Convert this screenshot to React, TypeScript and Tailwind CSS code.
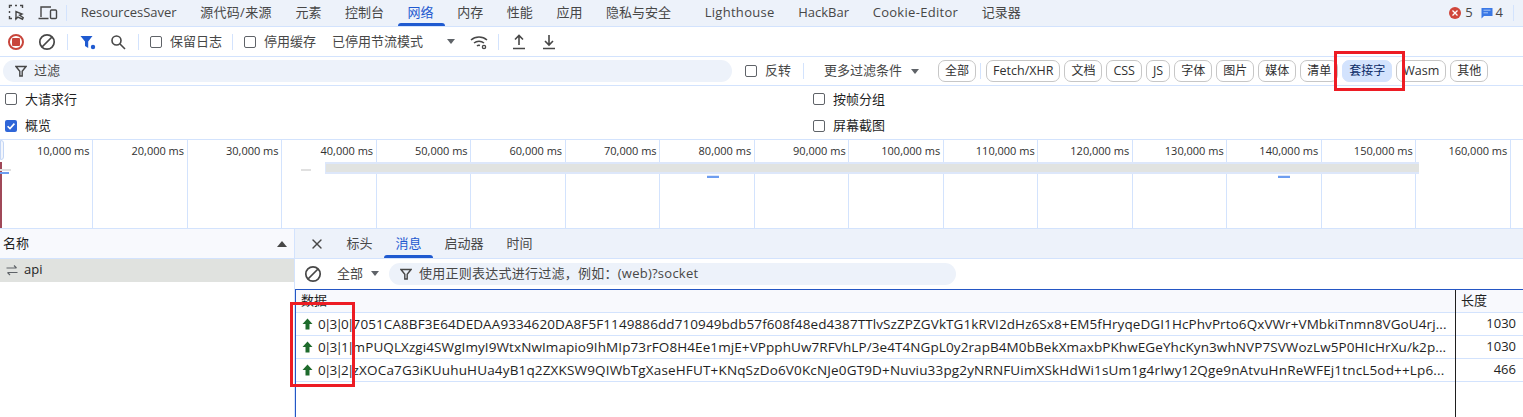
import { X } from 'lucide-react';

const FONT = "[font-family:'Open_Sans','Noto_Sans_CJK_SC',sans-serif]";

const mainTabs = [
  'ResourcesSaver',
  '源代码/来源',
  '元素',
  '控制台',
  '网络',
  '内存',
  '性能',
  '应用',
  '隐私与安全',
];
const extraTabs = ['Lighthouse', 'HackBar', 'Cookie-Editor', '记录器'];
const wideTabs = ['源代码/来源', 'Lighthouse', 'Cookie-Editor'];

const chips = ['Fetch/XHR', '文档', 'CSS', 'JS', '字体', '图片', '媒体', '清单', '套接字', 'Wasm', '其他'];

const ticks = [
  '10,000 ms', '20,000 ms', '30,000 ms', '40,000 ms', '50,000 ms', '60,000 ms', '70,000 ms', '80,000 ms',
  '90,000 ms', '100,000 ms', '110,000 ms', '120,000 ms', '130,000 ms', '140,000 ms', '150,000 ms', '160,000 ms',
];

const messages = [
  {
    prefix: '0|3|0|',
    data: '7051CA8BF3E64DEDAA9334620DA8F5F1149886dd710949bdb57f608f48ed4387TTlvSzZPZGVkTG1kRVI2dHz6Sx8+EM5fHryqeDGI1HcPhvPrto6QxVWr+VMbkiTnmn8VGoU4rj...',
    len: 1030,
    fit: 'tracking-[0.09px]',
  },
  {
    prefix: '0|3|1|',
    data: 'mPUQLXzgi4SWgImyI9WtxNwImapio9IhMIp73rFO8H4Ee1mjE+VPpphUw7RFVhLP/3e4T4NGpL0y2rapB4M0bBekXmaxbPKhwEGeYhcKyn3whNVP7SVWozLw5P0HIcHrXu/k2p...',
    len: 1030,
    fit: 'tracking-[0.09px]',
  },
  {
    prefix: '0|3|2|',
    data: 'zXOCa7G3iKUuhuHUa4yB1q2ZXKSW9QIWbTgXaseHFUT+KNqSzDo6V0KcNJe0GT9D+Nuviu33pg2yNRNFUimXSkHdWi1sUm1g4rIwy12Qge9nAtvuHnReWFEj1tncL5od++Lp6...',
    len: 466,
    fit: 'tracking-[0.16px]',
  },
];

function Sep({ className = '' }: { className?: string }) {
  return <div className={`h-4 w-px bg-[#d3e3fd] ${className}`} />;
}

function Check({ label, checked = false, className = '' }: { label: string; checked?: boolean; className?: string }) {
  return (
    <label className={`flex items-center gap-2 ${className}`}>
      {checked ? (
        <span className="flex h-3 w-3 items-center justify-center rounded-[2px] bg-[#2f66d8]">
          <svg viewBox="0 0 12 12" className="h-3 w-3" fill="none" stroke="white" strokeWidth="1.6">
            <path d="M2.6 6.2 5 8.6l4.4-5" />
          </svg>
        </span>
      ) : (
        <span className="h-3 w-3 rounded-[2px] border border-[#5f6368]" />
      )}
      <span>{label}</span>
    </label>
  );
}

function Caret({ className = '' }: { className?: string }) {
  return <span className={`h-0 w-0 border-x-4 border-t-[5px] border-x-transparent border-t-[#5f6368] ${className}`} />;
}

function ClearIcon() {
  return (
    <svg viewBox="0 0 18 18" className="h-[18px] w-[18px]" fill="none" stroke="#474747" strokeWidth="1.7">
      <circle cx="9" cy="9" r="7.2" />
      <path d="M4 14 14 4" />
    </svg>
  );
}

function FunnelIcon({ className = '' }: { className?: string }) {
  return (
    <svg viewBox="0 0 12 12" className={`h-3 w-3 ${className}`} fill="none" stroke="#474747" strokeWidth="1.4">
      <path d="M1 1.5h10L7.2 6.2V11H4.8V6.2Z" />
    </svg>
  );
}

function TopTab({ label, active = false }: { label: string; active?: boolean }) {
  return (
    <div
      className={`relative flex h-full items-center px-[11.8px] ${wideTabs.includes(label) ? 'tracking-[0.3px]' : ''} ${
        active ? 'text-[#1f5ad0]' : 'text-[#474747]'
      }`}
    >
      {label}
      {active && <span className="absolute left-[2px] right-0 bottom-0 h-[3px] rounded-t-[3px] bg-[#1f5ad0]" />}
    </div>
  );
}

function TabBar() {
  return (
    <div className="flex h-[27px] items-center border-b border-[#d3e3fd] bg-[#edf2fa] text-[13px]">
      <div className="ml-2 flex w-[57px] shrink-0 items-center gap-3">
        <svg viewBox="0 0 18 18" className="h-[18px] w-[18px]" fill="none" stroke="#474747" strokeWidth="1.4">
          <path d="M1.5 4V1.5H4M7 1.5h2M12 1.5h2.5V4M1.5 7v2M1.5 12v2.5H4M7 14.5h1" />
          <path d="M9 8.5v7.5l1.9-2 4.6 2.2.7-1.5-3.6-2.6 2.4-1Z" transform="translate(-1 -1)" />
        </svg>
        <svg viewBox="0 0 20 16" className="h-4 w-5" fill="none" stroke="#474747" strokeWidth="1.4">
          <path d="M3 12V2h10M0.5 13.5h10" />
          <rect x="12.5" y="5" width="6" height="8.5" rx="1" />
        </svg>
      </div>
      <Sep className="ml-px" />
      <div className="ml-[2px] flex h-full items-center">
        {mainTabs.map((tab) => (
          <TopTab key={tab} label={tab} active={tab === '网络'} />
        ))}
      </div>
      <div className="ml-[10px] flex h-full items-center">
        {extraTabs.map((tab) => (
          <TopTab key={tab} label={tab} />
        ))}
      </div>
      <div className="ml-auto flex items-center text-[#474747]">
        <span className="flex items-center gap-[4px]">
          <span className="flex h-3 w-3 items-center justify-center rounded-full bg-[#d0453a]">
            <svg viewBox="0 0 8 8" className="h-2 w-2" stroke="white" strokeWidth="1.3">
              <path d="M1.5 1.5l5 5M6.5 1.5l-5 5" />
            </svg>
          </span>
          5
        </span>
        <span className="ml-[8px] flex items-center gap-[3px]">
          <svg viewBox="0 0 12 12" className="h-3 w-3">
            <path d="M0.5 1h11v8H3l-2.5 2.5Z" fill="#3a78e6" />
            <path d="M2.5 3.2h7M2.5 5.8h4.5" stroke="#a9c7f7" strokeWidth="1" />
          </svg>
          4
        </span>
        <Sep className="ml-[10px] mr-[9px]" />
      </div>
    </div>
  );
}

function NetToolbar() {
  return (
    <div className="flex h-[30px] items-center border-b border-[#d3e3fd] bg-white text-[13px] text-[#474747]">
      <div className="ml-[8px] flex h-4 w-4 items-center justify-center rounded-full border-2 border-[#c8453b]">
        <span className="h-2 w-2 rounded-[1px] bg-[#c8453b]" />
      </div>
      <div className="ml-[14px]">
        <ClearIcon />
      </div>
      <Sep className="ml-[11px]" />
      <svg viewBox="0 0 16 16" className="ml-[12px] h-4 w-4">
        <path d="M0.5 2h12L8.2 7.4V14L5 12V7.4Z" fill="#1f5ad0" />
        <circle cx="13" cy="13" r="2.2" fill="#1f5ad0" />
      </svg>
      <svg viewBox="0 0 16 16" className="ml-[14px] h-4 w-4" fill="none" stroke="#474747" strokeWidth="1.6">
        <circle cx="6.5" cy="6.5" r="4.5" />
        <path d="m10 10 5 5" />
      </svg>
      <Sep className="ml-[12px]" />
      <Check label="保留日志" className="ml-[11px]" />
      <Sep className="ml-[10px]" />
      <Check label="停用缓存" className="ml-[11px]" />
      <span className="ml-[16px] w-[115px]">已停用节流模式</span>
      <Caret />
      <svg viewBox="0 0 18 16" className="ml-[15px] h-4 w-[18px]" fill="none" stroke="#474747" strokeWidth="1.5">
        <path d="M1 6c4.5-4 11.5-4 16 0M4 9c2.8-2.4 7.2-2.4 10 0M7 12c.8-.7 2-.9 3-.5" />
        <circle cx="14" cy="13" r="1.6" strokeWidth="1.4" />
      </svg>
      <Sep className="ml-[10px]" />
      <svg viewBox="0 0 14 16" className="ml-[13px] h-4 w-[14px]" fill="none" stroke="#474747" strokeWidth="1.6">
        <path d="M7 11V2M3 5.5 7 1.5l4 4M1 14.5h12" />
      </svg>
      <svg viewBox="0 0 14 16" className="ml-[16px] h-4 w-[14px]" fill="none" stroke="#474747" strokeWidth="1.6">
        <path d="M7 1v9.5M3 7l4 4 4-4M1 14.5h12" />
      </svg>
    </div>
  );
}

function Chip({ label }: { label: string }) {
  const active = label === '套接字';
  const latin = /^[A-Za-z]/.test(label);
  return (
    <div
      className={`flex h-[22px] items-center rounded-[7px] border px-[6px] ${latin ? 'text-[12.5px]' : 'text-[12px]'} ${
        active ? 'border-[#d3e3fd] bg-[#d3e3fd] text-[#0a2a66]' : 'border-[#c7c7c7] text-[#303030]'
      }`}
    >
      {label}
    </div>
  );
}

function FilterRow() {
  return (
    <div className="flex h-[29px] items-center border-b border-[#d3e3fd] bg-white text-[13px] text-[#474747]">
      <div className="ml-[3px] flex h-[22px] w-[729px] items-center rounded-full bg-[#edf2fa] pl-3">
        <FunnelIcon />
        <span className="ml-[7px]">过滤</span>
      </div>
      <Check label="反转" className="ml-[13px]" />
      <Sep className="ml-[12px]" />
      <span className="ml-[20px]">更多过滤条件</span>
      <Caret className="ml-[9px]" />
      <div className="ml-[19px]">
        <Chip label="全部" />
      </div>
      <Sep className="ml-[4px]" />
      <div className="ml-[5px] flex items-center gap-[4px]">
        {chips.map((chip) => (
          <Chip key={chip} label={chip} />
        ))}
      </div>
    </div>
  );
}

function Options() {
  return (
    <div className="grid h-[54px] grid-cols-[813px_1fr] items-center border-b border-[#d3e3fd] bg-white text-[13px] text-[#1f1f1f]">
      <Check label="大请求行" className="ml-[5px]" />
      <Check label="按帧分组" />
      <Check label="概览" checked className="ml-[5px]" />
      <Check label="屏幕截图" />
    </div>
  );
}

function Overview() {
  return (
    <div className="relative h-[89px] overflow-hidden border-b border-[#d3e3fd] bg-white text-[11px] text-[#303030]">
      <div className="ml-[-1.5px] flex h-full">
        {ticks.map((tick) => (
          <div
            key={tick}
            className="flex h-full w-[94.53px] shrink-0 justify-end border-r border-[#d3e3fd] pt-[4px] pr-[2.5px] leading-[14px]"
          >
            {tick}
          </div>
        ))}
      </div>
      {/* timeline marks sit over the grid lines */}
      <div className="absolute left-0 top-0 h-[20px] w-[4px] rounded-r-[3px] border border-[#c4d6f5] bg-[#f3f6fc]" />
      <div className="absolute left-0 top-[22px] h-[66px] w-[2px] bg-[#a04858]" />
      <div className="absolute left-0 top-[29px] h-[2px] w-[11px] bg-[#e0e0e0]" />
      <div className="absolute left-0 top-[32px] h-[2px] w-[9px] bg-[#6d9df0]" />
      <div className="absolute left-[301px] top-[29px] h-[2px] w-[10px] bg-[#e0e0e0]" />
      <div className="absolute left-[325px] top-[22px] h-[12px] w-[1094px] border-y-2 border-l border-[#dde7fa] bg-[#e1e3e1]" />
      <div className="absolute left-[707px] top-[35px] h-[3px] w-[12px] border-t border-[#dde7fa] bg-[#6d9df0]" />
      <div className="absolute left-[1278px] top-[35px] h-[3px] w-[12px] border-t border-[#dde7fa] bg-[#6d9df0]" />
    </div>
  );
}

function Requests() {
  return (
    <div className="w-[295px] shrink-0 border-r border-[#d3e3fd] bg-white text-[13px] text-[#1f1f1f]">
      <div className="flex h-[30px] items-center justify-between border-b border-[#d3e3fd] bg-[#f8f9fd] pl-[3px] pr-[7px]">
        <span>名称</span>
        <span className="h-0 w-0 border-x-[5px] border-b-[6px] border-x-transparent border-b-[#474747]" />
      </div>
      <div className="flex h-[23px] items-center gap-[6px] bg-[#e0e2df] pb-[1px] pl-[6px]">
        <svg viewBox="0 0 12 12" className="h-3 w-3" fill="none" stroke="#5f6368" strokeWidth="1.2">
          <path d="M0.5 4h10M8 1.5 10.5 4M11.5 8.5h-10M4 11 1.5 8.5" />
        </svg>
        api
      </div>
    </div>
  );
}

function DetailTab({ label, active = false }: { label: string; active?: boolean }) {
  return (
    <div className={`relative flex h-full items-center px-[11.5px] ${active ? 'text-[#1f5ad0]' : 'text-[#474747]'}`}>
      {label}
      {active && <span className="absolute inset-x-0 bottom-0 h-[3px] rounded-t-[3px] bg-[#1f5ad0]" />}
    </div>
  );
}

function Detail() {
  return (
    <div className="flex min-w-0 flex-1 flex-col bg-white text-[13px]">
      <div className="flex h-[30px] items-center border-b border-[#d3e3fd] bg-[#edf2fa]">
        <X className="ml-[14px] h-[16px] w-[16px] text-[#474747]" strokeWidth={2} />
        <div className="ml-[10px] flex h-full items-center">
          <DetailTab label="标头" />
          <DetailTab label="消息" active />
          <DetailTab label="启动器" />
          <DetailTab label="时间" />
        </div>
      </div>
      <div className="flex h-[30px] items-center pb-[1px] text-[#474747]">
        <div className="ml-[9px]">
          <ClearIcon />
        </div>
        <span className="ml-[15px]">全部</span>
        <Caret className="ml-[8px]" />
        <div className="ml-[10px] flex h-[22px] w-[567px] items-center rounded-full bg-[#edf2fa] pl-[11px]">
          <FunnelIcon />
          <span className="ml-[7px] tracking-[0.25px]">使用正则表达式进行过滤，例如：(web)?socket</span>
        </div>
      </div>
      <div className="grid min-h-0 flex-1 grid-cols-[1fr_67px] border-t border-l border-[#2456c4]">
        <div className="min-w-0 border-r border-[#1f1f1f]">
          <div className="flex h-[23px] items-center border-b border-[#d3e3fd] bg-[#f8f9fd] pl-[5px] text-[#1f1f1f]">数据</div>
          {messages.map((msg) => (
            <div key={msg.data} className="flex h-[23px] items-center border-b border-[#d3e3fd] pl-[6px] text-[13.5px] text-[#1f1f1f]">
              <svg viewBox="0 0 11 12" className="h-3 w-[11px] shrink-0">
                <path d="M5.5 0.5 10.5 6H7.5v5.5h-4V6H0.5Z" fill="#1e6b2c" />
              </svg>
              <span className="ml-[5px] shrink-0 tracking-[-1.8px]">{msg.prefix}</span>
              <span className={`overflow-hidden whitespace-nowrap ${msg.fit}`}>{msg.data}</span>
            </div>
          ))}
        </div>
        <div>
          <div className="flex h-[23px] items-center border-b border-[#d3e3fd] bg-[#f8f9fd] pl-[5px] text-[#1f1f1f]">长度</div>
          {messages.map((msg) => (
            <div key={msg.data} className="flex h-[23px] items-center justify-end border-b border-[#d3e3fd] pr-[7px] text-[#1f1f1f]">
              {msg.len}
            </div>
          ))}
        </div>
      </div>
    </div>
  );
}

export default function App() {
  return (
    <div className={`relative flex h-[417px] w-[1523px] flex-col overflow-hidden bg-white ${FONT}`}>
      <TabBar />
      <NetToolbar />
      <FilterRow />
      <Options />
      <Overview />
      <div className="flex min-h-0 flex-1">
        <Requests />
        <Detail />
      </div>
      {/* red annotation boxes drawn over the screenshot */}
      <div className="absolute left-[1334px] top-[51px] h-[40px] w-[71px] border-[3px] border-[#ed1c24]" />
      <div className="absolute left-[290px] top-[302px] h-[85px] w-[65px] border-[3px] border-[#ed1c24]" />
    </div>
  );
}
